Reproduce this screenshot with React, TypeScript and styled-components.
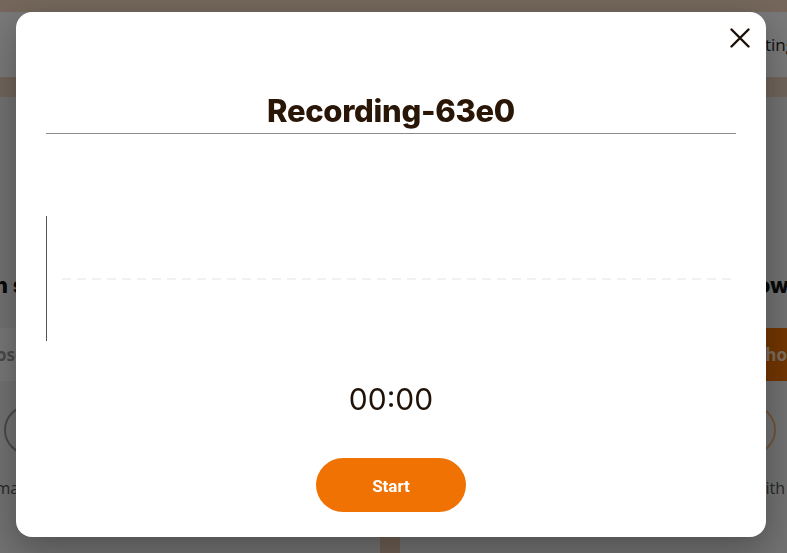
import React from "react";
import styled, { createGlobalStyle } from "styled-components";

const Global = createGlobalStyle`
  html, body { margin: 0; padding: 0; width: 787px; height: 553px; overflow: hidden; }
  body { font-family: Inter, "Noto Sans", sans-serif; background: #efefef; }
  * { box-sizing: border-box; }
`;

const Page = styled.div`
  display: flex;
  flex-direction: column;
  height: 553px;
  overflow: hidden;
`;

const TopStrip = styled.div`
  height: 12px;
  background: #f6d9c2;
`;

const Header = styled.header`
  height: 65px;
  background: #ffffff;
  display: flex;
  align-items: center;
  justify-content: flex-end;
`;

const NavItem = styled.span`
  font-family: "Open Sans", sans-serif;
  font-size: 17px;
  color: #2a2a2a;
  margin-right: -16px;
  white-space: nowrap;
`;

const Band = styled.div`
  height: 20px;
  background: #ecd3bf;
`;

const Main = styled.main`
  flex: 1;
  display: grid;
  grid-template-columns: 380px 20px 1fr;
  background: #efefef;
`;

const Divider = styled.div`
  background: #e6c6ae;
`;

const Card = styled.section<{ $side: "left" | "right" }>`
  display: flex;
  flex-direction: column;
  align-items: ${(p) => (p.$side === "left" ? "flex-start" : "flex-end")};
  padding-top: 174px;
  min-width: 0;
`;

const CardHeading = styled.h2<{ $shift: number }>`
  margin: 0;
  font-family: Inter, sans-serif;
  font-weight: 800;
  font-size: 22px;
  line-height: 28px;
  color: #111;
  white-space: nowrap;
  margin-left: ${(p) => p.$shift}px;
  margin-right: ${(p) => p.$shift}px;
`;

const CardButton = styled.div<{ $primary?: boolean; $shift: number }>`
  margin-top: 29px;
  height: 53px;
  width: 300px;
  flex-shrink: 0;
  display: flex;
  align-items: center;
  justify-content: center;
  font-family: "Open Sans", sans-serif;
  font-weight: 700;
  font-size: 17px;
  white-space: nowrap;
  background: ${(p) => (p.$primary ? "#f07000" : "#fafafa")};
  color: ${(p) => (p.$primary ? "#ffe6cc" : "#9a9a9a")};
  margin-left: ${(p) => p.$shift}px;
  margin-right: ${(p) => p.$shift}px;
`;

const Circle = styled.div<{ $tone: string; $shift: number }>`
  margin-top: 24px;
  width: 50px;
  height: 50px;
  border-radius: 50%;
  border: 2px solid ${(p) => p.$tone};
  margin-left: ${(p) => p.$shift}px;
  margin-right: ${(p) => p.$shift}px;
`;

const CardText = styled.p<{ $shift: number }>`
  margin: 23px 0 0;
  font-family: "Open Sans", sans-serif;
  font-size: 16px;
  line-height: 20px;
  color: #555;
  white-space: nowrap;
  margin-left: ${(p) => p.$shift}px;
  margin-right: ${(p) => p.$shift}px;
`;

const Overlay = styled.div`
  position: fixed;
  inset: 0;
  background: rgba(0, 0, 0, 0.53);
  display: flex;
  align-items: flex-start;
  padding: 12px 0 0 16px;
`;

const Modal = styled.div`
  position: relative;
  width: 750px;
  background: #ffffff;
  border-radius: 16px;
  box-shadow: 0 12px 36px rgba(0, 0, 0, 0.3);
  padding: 0 30px 25px;
  display: flex;
  flex-direction: column;
  align-items: center;
`;

const CloseButton = styled.button`
  position: absolute;
  top: 16px;
  right: 16px;
  width: 20px;
  height: 20px;
  padding: 0;
  border: none;
  background: none;
  cursor: pointer;
  display: flex;
`;

const Title = styled.h1`
  align-self: stretch;
  margin: 82px 0 0;
  padding-bottom: 5px;
  border-bottom: 1px solid #8c8c8c;
  text-align: center;
  font-family: Inter, sans-serif;
  font-weight: 800;
  font-size: 31px;
  line-height: 34px;
  color: #2a1606;
  letter-spacing: -0.3px;
`;

const Wave = styled.div`
  align-self: stretch;
  margin-top: 82px;
  height: 125px;
  display: flex;
  align-items: center;
`;

const Cursor = styled.div`
  width: 1px;
  align-self: stretch;
  background: #555;
`;

const CenterLine = styled.div`
  flex: 1;
  height: 2px;
  margin: 0 5px 0 15px;
  background: repeating-linear-gradient(to right, #f1f1f1 0 9px, transparent 9px 15px);
`;

const Timer = styled.div`
  margin-top: 40px;
  font-family: Inter, sans-serif;
  font-size: 30px;
  line-height: 36px;
  color: #1f1208;
`;

const StartButton = styled.button`
  margin-top: 41px;
  width: 150px;
  height: 54px;
  border: none;
  border-radius: 27px;
  background: #ef7203;
  color: #ffffff;
  font-family: Roboto, sans-serif;
  font-weight: 700;
  font-size: 17px;
  line-height: 20px;
  padding-top: 2px;
  cursor: pointer;
`;

export default function App() {
  return (
    <>
      <Global />
      <Page>
        <TopStrip />
        <Header>
          <NavItem>Settings</NavItem>
        </Header>
        <Band />
        <Main>
          <Card $side="left">
            <CardHeading $shift={-94}>Record in studio</CardHeading>
            <CardButton $shift={-140}>Choose file</CardButton>
            <Circle $tone="#9a9a9a" $shift={4} />
            <CardText $shift={-37}>Use max quality</CardText>
          </Card>
          <Divider />
          <Card $side="right">
            <CardHeading $shift={-2}>Follow</CardHeading>
            <CardButton $primary $shift={-164}>Choose file</CardButton>
            <Circle $tone="#f0b27a" $shift={11} />
            <CardText $shift={2}>Share with</CardText>
          </Card>
        </Main>
      </Page>
      <Overlay>
        <Modal>
          <CloseButton aria-label="Close">
            <svg width="20" height="20" viewBox="0 0 20 20">
              <path d="M1.5 1.5 L18.5 18.5 M18.5 1.5 L1.5 18.5" stroke="#1a1008" strokeWidth="2.4" strokeLinecap="round" />
            </svg>
          </CloseButton>
          <Title>Recording-63e0</Title>
          <Wave>
            <Cursor />
            <CenterLine />
          </Wave>
          <Timer>00:00</Timer>
          <StartButton>Start</StartButton>
        </Modal>
      </Overlay>
    </>
  );
}
